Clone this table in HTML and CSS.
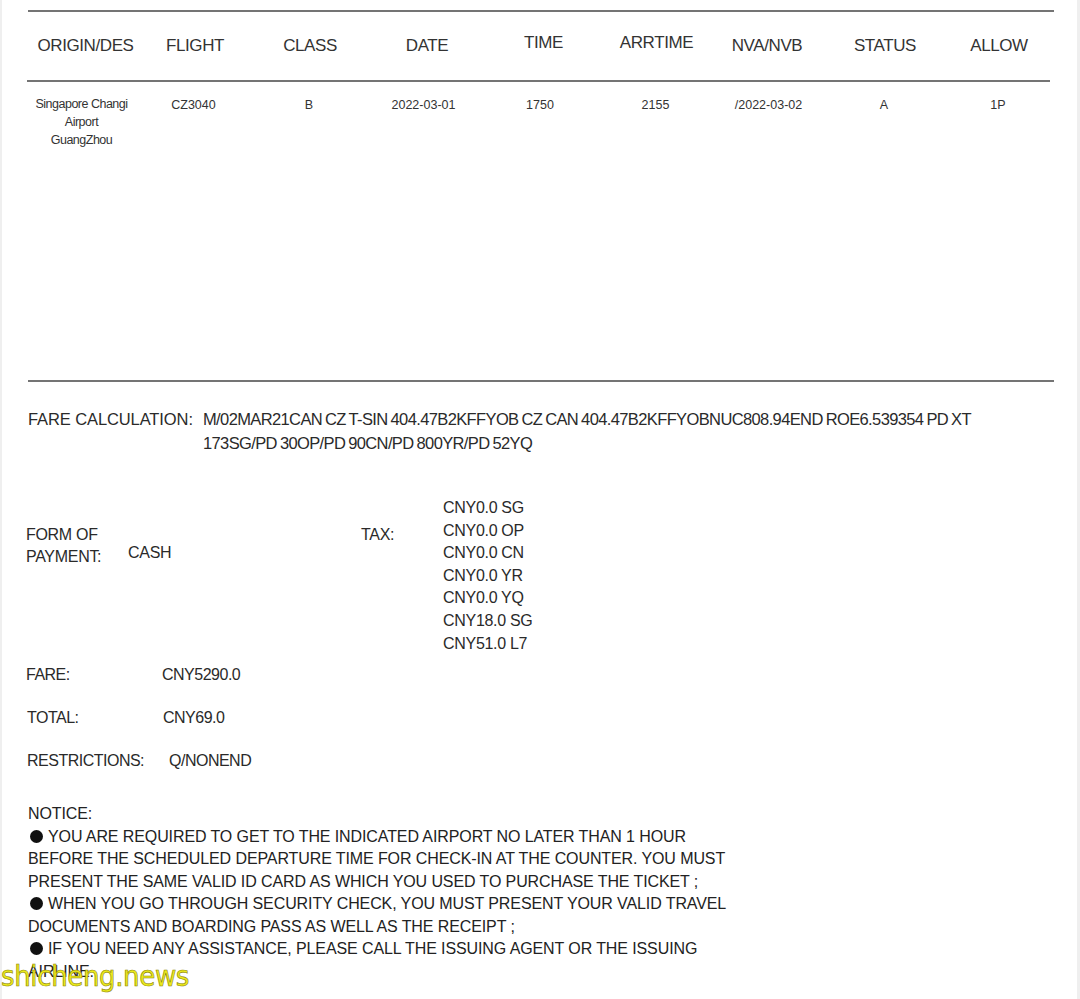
FILE: index.html
```html
<!DOCTYPE html>
<html>
<head>
<meta charset="utf-8">
<link rel="stylesheet" href="styles.css">
</head>
<body>
<div class="page">
  <div class="rule"></div>
  <div class="grid thead">
    <div>ORIGIN/DES</div>
    <div>FLIGHT</div>
    <div>CLASS</div>
    <div>DATE</div>
    <div class="raised">TIME</div>
    <div class="raised">ARRTIME</div>
    <div class="nva">NVA/NVB</div>
    <div>STATUS</div>
    <div>ALLOW</div>
  </div>
  <div class="rule short"></div>
  <div class="grid tbody">
    <div class="origin">Singapore Changi<br>Airport<br>GuangZhou</div>
    <div class="shift-l">CZ3040</div>
    <div>B</div>
    <div class="shift-l">2022-03-01</div>
    <div class="shift-l">1750</div>
    <div>2155</div>
    <div>/2022-03-02</div>
    <div>A</div>
    <div>1P</div>
  </div>
  <div class="rule"></div>

  <div class="farecalc">
    <div class="fc-label">FARE CALCULATION:</div>
    <div class="fc-value">M/02MAR21CAN CZ T-SIN 404.47B2KFFYOB CZ CAN 404.47B2KFFYOBNUC808.94END ROE6.539354 PD XT<br>173SG/PD 30OP/PD 90CN/PD 800YR/PD 52YQ</div>
  </div>

  <div class="payrow">
    <div class="fop">
      <div class="fop-label">FORM OF<br>PAYMENT:</div>
      <div class="fop-value">CASH</div>
    </div>
    <div class="tax">
      <div class="tax-label">TAX:</div>
      <ul class="tax-list">
        <li>CNY0.0 SG</li>
        <li>CNY0.0 OP</li>
        <li>CNY0.0 CN</li>
        <li>CNY0.0 YR</li>
        <li>CNY0.0 YQ</li>
        <li>CNY18.0 SG</li>
        <li>CNY51.0 L7</li>
      </ul>
    </div>
  </div>

  <div class="kv fare"><span class="k">FARE:</span><span class="v">CNY5290.0</span></div>
  <div class="kv total"><span class="k">TOTAL:</span><span class="v">CNY69.0</span></div>
  <div class="kv restr"><span class="k">RESTRICTIONS:</span><span class="v">Q/NONEND</span></div>

  <div class="notice">
    <div>NOTICE:</div>
    <div><span class="dot"></span>YOU ARE REQUIRED TO GET TO THE INDICATED AIRPORT NO LATER THAN 1 HOUR</div>
    <div>BEFORE THE SCHEDULED DEPARTURE TIME FOR CHECK-IN AT THE COUNTER. YOU MUST</div>
    <div>PRESENT THE SAME VALID ID CARD AS WHICH YOU USED TO PURCHASE THE TICKET ;</div>
    <div><span class="dot"></span>WHEN YOU GO THROUGH SECURITY CHECK, YOU MUST PRESENT YOUR VALID TRAVEL</div>
    <div>DOCUMENTS AND BOARDING PASS AS WELL AS THE RECEIPT ;</div>
    <div><span class="dot"></span>IF YOU NEED ANY ASSISTANCE, PLEASE CALL THE ISSUING AGENT OR THE ISSUING</div>
    <div>AIRLINE.</div>
  </div>
</div>
<div class="watermark">shicheng.news</div>
</body>
</html>
```
FILE: styles.css
```css
html, body {
  margin: 0;
  padding: 0;
  background: #fff;
}
body {
  width: 1080px;
  height: 999px;
  overflow: hidden;
  position: relative;
  font-family: "Liberation Sans", Arial, sans-serif;
  color: #2a2a2a;
}
.page {
  box-sizing: border-box;
  width: 1080px;
  height: 999px;
  padding: 10px 24px 0 26px;
  border-left: 2px solid #efefef;
  border-right: 3px solid #efefef;
}
.rule {
  height: 0;
  border-top: 2px solid #747474;
  width: 1026px;
}
.rule.short {
  width: 1023px;
  margin-left: -1px;
}
.grid {
  display: grid;
  grid-template-columns: 113px 110px 116px 118px 115px 111px 115px 116px 112px;
  text-align: center;
}
.thead {
  height: 68px;
  font-size: 17px;
  letter-spacing: -0.4px;
  color: #333;
  padding: 24px 0 0 1px;
  box-sizing: border-box;
}
.thead > div:nth-child(2) {
  margin-left: -4px;
}
.thead .nva {
  margin-left: -5px;
}
.thead .raised {
  margin-top: -3px;
}
.tbody {
  height: 298px;
  font-size: 12.5px;
  padding-top: 16px;
  box-sizing: border-box;
  color: #333;
}
.tbody .origin {
  line-height: 18px;
  letter-spacing: -0.5px;
  margin-top: -3px;
  margin-left: -6px;
}
.tbody .shift-l {
  margin-left: -5px;
}
.farecalc {
  display: flex;
  margin-top: 25px;
  font-size: 16.5px;
  line-height: 24px;
}
.fc-label {
  width: 175px;
  letter-spacing: -0.1px;
}
.fc-value {
  letter-spacing: -0.62px;
  word-spacing: -1px;
}
.payrow {
  display: flex;
  margin-top: 40px;
  margin-left: -2px;
  font-size: 16px;
  letter-spacing: -0.3px;
}
.fop {
  display: flex;
  width: 335px;
  padding-top: 29px;
}
.fop-label {
  width: 102px;
  line-height: 22px;
}
.fop-value {
  padding-top: 20px;
}
.tax {
  display: flex;
}
.tax-label {
  width: 82px;
  padding-top: 31px;
}
.tax-list {
  list-style: none;
  margin: 0;
  padding: 2px 0 0 0;
  line-height: 22.6px;
}
.kv {
  display: flex;
  margin-left: -2px;
  font-size: 16px;
  letter-spacing: -0.5px;
}
.kv .k {
  width: 136px;
}
.fare {
  margin-top: 11px;
}
.total {
  margin-top: 25px;
}
.total .k, .restr .k {
  margin-left: 1px;
}
.restr {
  margin-top: 25px;
}
.restr .k {
  width: 142px;
}
.notice {
  margin-top: 33px;
  font-size: 16px;
  line-height: 22.5px;
  letter-spacing: -0.1px;
  color: #222;
}
.dot {
  display: inline-block;
  width: 13px;
  height: 13px;
  border-radius: 50%;
  background: #111;
  margin: 0 5px 0 2px;
  vertical-align: -1px;
}
.watermark {
  position: absolute;
  left: 1px;
  top: 958px;
  font-family: "DejaVu Sans Condensed", "DejaVu Sans", sans-serif;
  font-size: 29px;
  letter-spacing: -0.4px;
  color: #ecea1c;
  -webkit-text-stroke: 0.6px #8a8400;
  line-height: 36px;
}
```
